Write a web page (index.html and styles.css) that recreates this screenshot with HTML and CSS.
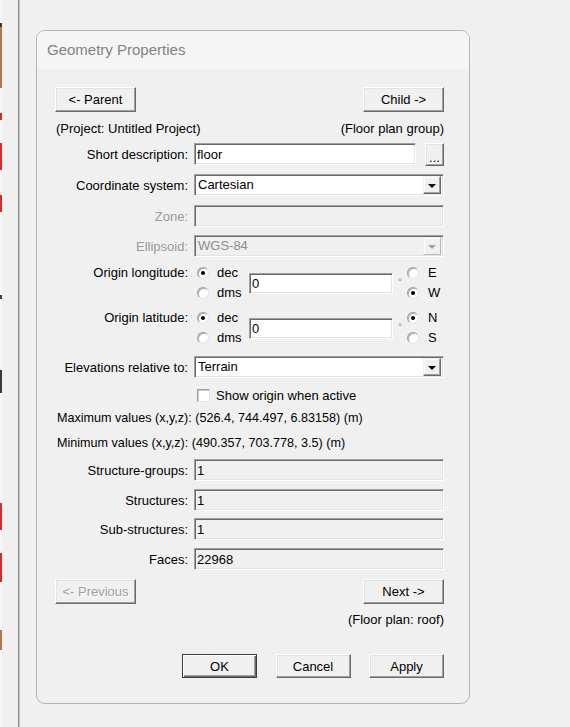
FILE: index.html
```html
<!DOCTYPE html>
<html>
<head>
<meta charset="utf-8">
<link rel="stylesheet" href="styles.css">
</head>
<body>
<div class="app">
  <div class="edge">
    <div class="seg light" style="height:23px"></div>
    <div class="seg dark" style="height:4px"></div>
    <div class="seg brown" style="height:61px"></div>
    <div class="seg light" style="height:25px"></div>
    <div class="seg red" style="height:7px"></div>
    <div class="seg light" style="height:23px"></div>
    <div class="seg red" style="height:27px"></div>
    <div class="seg light" style="height:25px"></div>
    <div class="seg red" style="height:17px"></div>
    <div class="seg light" style="height:83px"></div>
    <div class="seg dark" style="height:4px"></div>
    <div class="seg light" style="height:71px"></div>
    <div class="seg dark" style="height:23px"></div>
    <div class="seg light" style="height:110px"></div>
    <div class="seg red" style="height:27px"></div>
    <div class="seg light" style="height:23px"></div>
    <div class="seg red" style="height:29px"></div>
    <div class="seg light" style="height:48px"></div>
    <div class="seg brown" style="height:20px"></div>
    <div class="seg light" style="height:77px"></div>
  </div>
  <div class="divider"></div>
  <div class="main">
    <section class="panel">
      <header class="panel-head">Geometry Properties</header>
      <div class="panel-body">
        <div class="nav-row">
          <button class="btn nav">&lt;- Parent</button>
          <button class="btn nav">Child -&gt;</button>
        </div>
        <div class="info-row">
          <span>(Project: Untitled Project)</span>
          <span>(Floor plan group)</span>
        </div>

        <div class="row r-short">
          <label class="lbl">Short description:</label>
          <div class="ctl-flex">
            <div class="field short">floor</div>
            <button class="btn dots">...</button>
          </div>
        </div>

        <div class="row r-coord">
          <label class="lbl">Coordinate system:</label>
          <div class="select">
            <span class="sel-text">Cartesian</span>
            <span class="sel-btn"><i class="tri"></i></span>
          </div>
        </div>

        <div class="row r-zone">
          <label class="lbl dis">Zone:</label>
          <div class="field disabled"></div>
        </div>

        <div class="row r-ell">
          <label class="lbl dis">Ellipsoid:</label>
          <div class="select disabled">
            <span class="sel-text">WGS-84</span>
            <span class="sel-btn"><i class="tri"></i></span>
          </div>
        </div>

        <div class="row geo r-lon">
          <label class="lbl">Origin longitude:</label>
          <div class="geo-ctl">
            <div class="radios fmt">
              <div class="opt"><span class="radio on"></span>dec</div>
              <div class="opt"><span class="radio"></span>dms</div>
            </div>
            <div class="field num">0</div>
            <span class="deg">°</span>
            <div class="radios hemi">
              <div class="opt"><span class="radio"></span>E</div>
              <div class="opt"><span class="radio on"></span>W</div>
            </div>
          </div>
        </div>

        <div class="row geo r-lat">
          <label class="lbl">Origin latitude:</label>
          <div class="geo-ctl">
            <div class="radios fmt">
              <div class="opt"><span class="radio on"></span>dec</div>
              <div class="opt"><span class="radio"></span>dms</div>
            </div>
            <div class="field num">0</div>
            <span class="deg">°</span>
            <div class="radios hemi">
              <div class="opt"><span class="radio on"></span>N</div>
              <div class="opt"><span class="radio"></span>S</div>
            </div>
          </div>
        </div>

        <div class="row r-elev">
          <label class="lbl">Elevations relative to:</label>
          <div class="select">
            <span class="sel-text">Terrain</span>
            <span class="sel-btn"><i class="tri"></i></span>
          </div>
        </div>

        <div class="check-row">
          <span class="checkbox"></span>
          <span>Show origin when active</span>
        </div>

        <div class="text-row r-max">Maximum values (x,y,z): (526.4, 744.497, 6.83158) (m)</div>
        <div class="text-row r-min">Minimum values (x,y,z): (490.357, 703.778, 3.5) (m)</div>

        <div class="row r-sg">
          <label class="lbl">Structure-groups:</label>
          <div class="field ro">1</div>
        </div>
        <div class="row r-st">
          <label class="lbl">Structures:</label>
          <div class="field ro">1</div>
        </div>
        <div class="row r-sub">
          <label class="lbl">Sub-structures:</label>
          <div class="field ro">1</div>
        </div>
        <div class="row r-faces">
          <label class="lbl">Faces:</label>
          <div class="field ro">22968</div>
        </div>

        <div class="nav-row r-prev">
          <button class="btn nav off">&lt;- Previous</button>
          <button class="btn nav">Next -&gt;</button>
        </div>
        <div class="info-row r-roof">
          <span></span>
          <span>(Floor plan: roof)</span>
        </div>

        <div class="action-row">
          <button class="btn act default">OK</button>
          <button class="btn act">Cancel</button>
          <button class="btn act">Apply</button>
        </div>
      </div>
    </section>
  </div>
</div>
</body>
</html>
```

FILE: styles.css
```css
* { box-sizing: border-box; }
html, body {
  margin: 0;
  padding: 0;
  background: #f0f0f0;
}
body {
  font-family: "Liberation Sans", Arial, sans-serif;
  font-size: 13px;
  color: #000;
  width: 570px;
  height: 727px;
  overflow: hidden;
}
.app {
  display: flex;
  height: 727px;
}
.edge {
  width: 2px;
  display: flex;
  flex-direction: column;
}
.seg { width: 2px; }
.seg.light { background: #f7f7f7; }
.seg.dark { background: #3a3a3a; }
.seg.brown { background: #b8744a; }
.seg.red { background: #d92a2a; }

.divider {
  margin-left: 16px;
  width: 2px;
  border-left: 1px solid #8c8c8c;
  border-right: 1px solid #c4c4c4;
}
.main {
  padding-left: 16px;
  padding-top: 30px;
}
.panel {
  width: 434px;
  height: 674px;
  border: 1px solid #b4b4b4;
  border-radius: 9px;
  background: #f0f0f0;
  overflow: hidden;
}
.panel-head {
  height: 38px;
  line-height: 37px;
  padding-left: 10px;
  font-size: 15px;
  color: #838383;
  background: #f5f5f5;
}
.panel-body {
  padding: 18px 25px 0 18px;
  display: flex;
  flex-direction: column;
}

/* Buttons */
.btn {
  font-family: inherit;
  font-size: 13px;
  color: #000;
  background: #f0f0f0;
  border: 1px solid;
  border-color: #ffffff #696969 #696969 #ffffff;
  box-shadow: inset -1px -1px 0 #a0a0a0, inset 1px 1px 0 #e3e3e3;
  padding: 0;
  margin: 0;
  border-radius: 0;
  text-align: center;
  line-height: 1;
}
.btn.nav {
  width: 81px;
  height: 25px;
}
.btn.off {
  color: #a0a0a0;
  text-shadow: 1px 1px 0 #ffffff;
}
.btn.dots {
  width: 19px;
  height: 23px;
  padding-top: 6px;
  flex: none;
}
.btn.act {
  width: 75px;
  height: 24px;
}
.btn.default {
  border: 1px solid #3c3c3c;
  box-shadow: inset 1px 1px 0 #ffffff, inset -1px -1px 0 #696969, inset -2px -2px 0 #a0a0a0;
}

.nav-row {
  display: flex;
  justify-content: space-between;
  height: 25px;
}
.info-row {
  display: flex;
  justify-content: space-between;
  height: 16px;
  line-height: 16px;
  margin-top: 9px;
  padding-left: 1px;
}

/* Form rows */
.row {
  display: grid;
  grid-template-columns: 133px 1fr;
  column-gap: 6px;
  align-items: center;
}
.lbl {
  text-align: right;
  white-space: nowrap;
}
.lbl.dis { color: #9a9a9a; }

.ctl-flex {
  display: flex;
  justify-content: space-between;
  align-items: flex-start;
}

.field {
  height: 22px;
  background: #ffffff;
  border: 1px solid;
  border-color: #a0a0a0 #ffffff #ffffff #a0a0a0;
  box-shadow: inset 1px 1px 0 #696969, inset -1px -1px 0 #e3e3e3;
  padding: 2px 0 0 2px;
  line-height: 17px;
  white-space: nowrap;
}
.field.short { width: 222px; }
.field.disabled, .field.ro { background: #f0f0f0; }
.field.num {
  width: 144px;
  height: 21px;
  line-height: 16px;
}

.select {
  height: 22px;
  background: #ffffff;
  border: 1px solid;
  border-color: #a0a0a0 #ffffff #ffffff #a0a0a0;
  box-shadow: inset 1px 1px 0 #696969, inset -1px -1px 0 #e3e3e3;
  display: flex;
  align-items: center;
  justify-content: space-between;
  padding: 2px 2px 2px 3px;
}
.select.disabled { background: #f0f0f0; color: #8c8c8c; }
.sel-text { line-height: 16px; }
.sel-btn {
  width: 18px;
  height: 18px;
  background: #f0f0f0;
  border: 1px solid;
  border-color: #f0f0f0 #696969 #696969 #f0f0f0;
  box-shadow: inset -1px -1px 0 #a0a0a0, inset 1px 1px 0 #ffffff;
  display: flex;
  align-items: center;
  justify-content: center;
}
.tri {
  display: block;
  width: 0;
  height: 0;
  border-left: 4px solid transparent;
  border-right: 4px solid transparent;
  border-top: 4px solid #000;
  margin-top: 1px;
}
.select.disabled .sel-btn { border-color: #f0f0f0 #b8b8b8 #b8b8b8 #f0f0f0; box-shadow: inset 1px 1px 0 #ffffff; }
.select.disabled .tri { border-top-color: #a0a0a0; }

.r-short { margin-top: 6px; }
.r-coord { margin-top: 8px; }
.r-zone { margin-top: 9px; }
.r-ell { margin-top: 8px; }
.r-lon { margin-top: 6px; }
.r-lat { margin-top: 5px; }
.r-elev { margin-top: 8px; }

/* Geo rows */
.row.geo { align-items: start; }
.row.geo .lbl { line-height: 20px; }
.geo-ctl {
  display: flex;
  align-items: center;
  height: 40px;
}
.radios {
  display: flex;
  flex-direction: column;
}
.radios.fmt {
  width: 55px;
  padding-left: 3px;
}
.opt {
  display: flex;
  align-items: center;
  height: 20px;
  line-height: 20px;
  white-space: nowrap;
}
.radio {
  width: 12px;
  height: 12px;
  border-radius: 50%;
  background: #ffffff;
  border: 1px solid;
  border-color: #a0a0a0 #e3e3e3 #e3e3e3 #a0a0a0;
  box-shadow: inset 1px 1px 0 #b0b0b0;
  margin-right: 8px;
  display: flex;
  align-items: center;
  justify-content: center;
  flex: none;
}
.radio.on::after {
  content: "";
  width: 4px;
  height: 4px;
  border-radius: 50%;
  background: #000;
}
.deg {
  width: 14px;
  text-align: center;
  font-size: 9px;
  color: #a07040;
  margin-top: -3px;
}
.radios.hemi .radio { margin-right: 9px; }

/* Checkbox */
.check-row {
  display: flex;
  align-items: center;
  height: 16px;
  margin-top: 9px;
  padding-left: 142px;
}
.checkbox {
  width: 13px;
  height: 13px;
  background: #fff;
  border: 1px solid;
  border-color: #a0a0a0 #e3e3e3 #e3e3e3 #a0a0a0;
  box-shadow: inset 1px 1px 0 #c8c8c8;
  margin-right: 6px;
}

.text-row {
  height: 16px;
  line-height: 16px;
  padding-left: 2px;
  font-size: 12.6px;
  white-space: nowrap;
}
.r-max { margin-top: 7px; }
.r-min { margin-top: 9px; }

.r-sg { margin-top: 8px; }
.r-st { margin-top: 8px; }
.r-sub { margin-top: 7px; }
.r-faces { margin-top: 8px; }

.r-prev { margin-top: 9px; }
.r-roof { margin-top: 8px; }

.action-row {
  display: flex;
  justify-content: flex-end;
  gap: 18.5px;
  margin-top: 26px;
}
```
